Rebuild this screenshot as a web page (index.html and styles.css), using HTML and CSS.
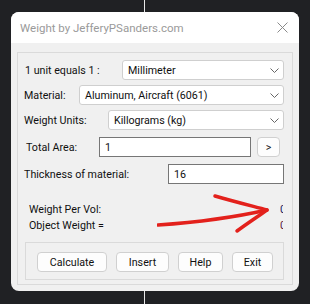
FILE: index.html
```html
<!DOCTYPE html>
<html lang="en">
<head>
  <meta charset="UTF-8" />
  <title>Weight by JefferyPSanders.com</title>
  <link rel="stylesheet" href="styles.css">
</head>
<body>

  <div class="window">
    <div class="titlebar">
      <span class="title">Weight by JefferyPSanders.com</span>
      <svg class="close" width="11" height="11" viewBox="0 0 11 11">
        <path d="M0.5 0.5 L10.5 10.5 M10.5 0.5 L0.5 10.5" stroke="#8a8a8a" stroke-width="1" fill="none" />
      </svg>
    </div>

    <div class="client">
      <div class="frame">

        <div class="row">
          <label class="lbl lbl-unit">1 unit equals 1 :</label>
          <div class="select">
            <span>Millimeter</span>
            <svg width="9" height="5" viewBox="0 0 9 5"><path d="M0.5 0.5 L4.5 4.5 L8.5 0.5" stroke="#666" fill="none" /></svg>
          </div>
        </div>

        <div class="row">
          <label class="lbl lbl-mat">Material:</label>
          <div class="select">
            <span>Aluminum, Aircraft (6061)</span>
            <svg width="9" height="5" viewBox="0 0 9 5"><path d="M0.5 0.5 L4.5 4.5 L8.5 0.5" stroke="#666" fill="none" /></svg>
          </div>
        </div>

        <div class="row">
          <label class="lbl lbl-wu">Weight Units:</label>
          <div class="select">
            <span>Killograms (kg)</span>
            <svg width="9" height="5" viewBox="0 0 9 5"><path d="M0.5 0.5 L4.5 4.5 L8.5 0.5" stroke="#666" fill="none" /></svg>
          </div>
        </div>

        <div class="row row-gap">
          <label class="lbl lbl-area">Total Area:</label>
          <input class="field field-area" type="text" value="1">
          <button class="btn btn-more">&gt;</button>
        </div>

        <div class="row row-gap">
          <label class="lbl lbl-thick">Thickness of material:</label>
          <input class="field" type="text" value="16">
        </div>

        <div class="results">
          <div class="result">
            <span>Weight Per Vol:</span>
            <span class="value">0</span>
          </div>
          <div class="result">
            <span>Object Weight =</span>
            <span class="value value-red">0</span>
          </div>
          <svg class="arrow" width="120" height="42" viewBox="0 0 120 42">
            <path d="M1 33 C 30 31, 70 27, 110 18" stroke="#e3211c" stroke-width="3.5" fill="none" stroke-linecap="round" />
            <path d="M58 4 C 75 9, 95 14, 110 18 C 100 25, 88 33, 80 39" stroke="#e3211c" stroke-width="3.5" fill="none" stroke-linecap="round" stroke-linejoin="round" />
          </svg>
        </div>

        <div class="buttons">
          <button class="btn btn-calc">Calculate</button>
          <button class="btn btn-insert">Insert</button>
          <button class="btn btn-help">Help</button>
          <button class="btn btn-exit">Exit</button>
        </div>

      </div>
    </div>
  </div>

</body>
</html>
```

FILE: styles.css
```css
body {
  margin: 0;
  height: 304px;
  overflow: hidden;
  font-family: Roboto, "Noto Sans", sans-serif;
  font-size: 10.7px;
  color: #101010;
  background: linear-gradient(to right, #202124 144px, #e8e8e8 144px, #e8e8e8 145px, #202124 145px);
}

.window {
  margin: 12px 0 0 11px;
  width: 288px;
  height: 279px;
  border-radius: 8px;
  overflow: hidden;
  background-color: #f0f0f0;
  display: flex;
  flex-direction: column;
}

.titlebar {
  height: 31px;
  flex: none;
  background-color: #fff;
  display: flex;
  align-items: center;
  justify-content: space-between;
  padding: 0 11px 0 9px;
}

.title {
  color: #9a9a9a;
  font-size: 11.5px;
}

.client {
  flex: 1;
  min-height: 0;
  padding: 9px 6px 6px 6px;
  display: flex;
}

.frame {
  flex: 1;
  min-width: 0;
  border: 1px solid #dadada;
  padding: 7px 8px 0 6px;
  display: flex;
  flex-direction: column;
  gap: 5px;
}

.row {
  display: flex;
  align-items: center;
  height: 20px;
}

.row-gap {
  margin-top: 2px;
}

.lbl {
  flex: none;
}

.lbl-unit { width: 97px; padding-left: 1px; }
.lbl-mat { width: 55px; }
.lbl-wu { width: 84px; }
.lbl-area { width: 73px; padding-left: 2px; }
.lbl-thick { width: 144px; }

.select {
  flex: 1;
  min-width: 0;
  height: 20px;
  box-sizing: border-box;
  background-color: #fff;
  border: 1px solid #cfcfcf;
  border-radius: 3px;
  display: flex;
  align-items: center;
  justify-content: space-between;
  padding: 0 4px 0 5px;
}

.field {
  flex: 1;
  min-width: 0;
  width: 0;
  height: 20px;
  box-sizing: border-box;
  margin: 0;
  border: 1px solid #767676;
  background-color: #fff;
  font-family: inherit;
  font-size: 10.7px;
  color: #101010;
  padding: 0 5px;
  outline: none;
}

.field-area {
  flex: none;
  width: 152px;
}

.btn {
  height: 20px;
  box-sizing: border-box;
  margin: 0;
  padding: 0;
  border: 1px solid #d0d0d0;
  border-radius: 4px;
  background-color: #fdfdfd;
  font-family: inherit;
  font-size: 10.7px;
  color: #101010;
}

.btn-more {
  width: 23px;
  margin-left: 6px;
}

.results {
  position: relative;
  margin-top: 13px;
  padding-left: 5px;
}

.result {
  display: flex;
  justify-content: space-between;
  height: 16px;
  line-height: 16px;
}

.value {
  display: inline-block;
  width: 3px;
  margin-right: 1px;
  overflow: hidden;
  color: #1a1a60;
}

.value-red {
  color: #5a1a40;
}

.arrow {
  position: absolute;
  left: 133px;
  top: -10px;
}

.buttons {
  margin: 3px 0 4px 1px;
  border: 1px solid #dadada;
  padding: 9px 0 7px 11px;
  display: flex;
  gap: 9px;
}

.btn-calc { width: 70px; }
.btn-insert { width: 53px; }
.btn-help { width: 45px; }
.btn-exit { width: 41px; }
```
